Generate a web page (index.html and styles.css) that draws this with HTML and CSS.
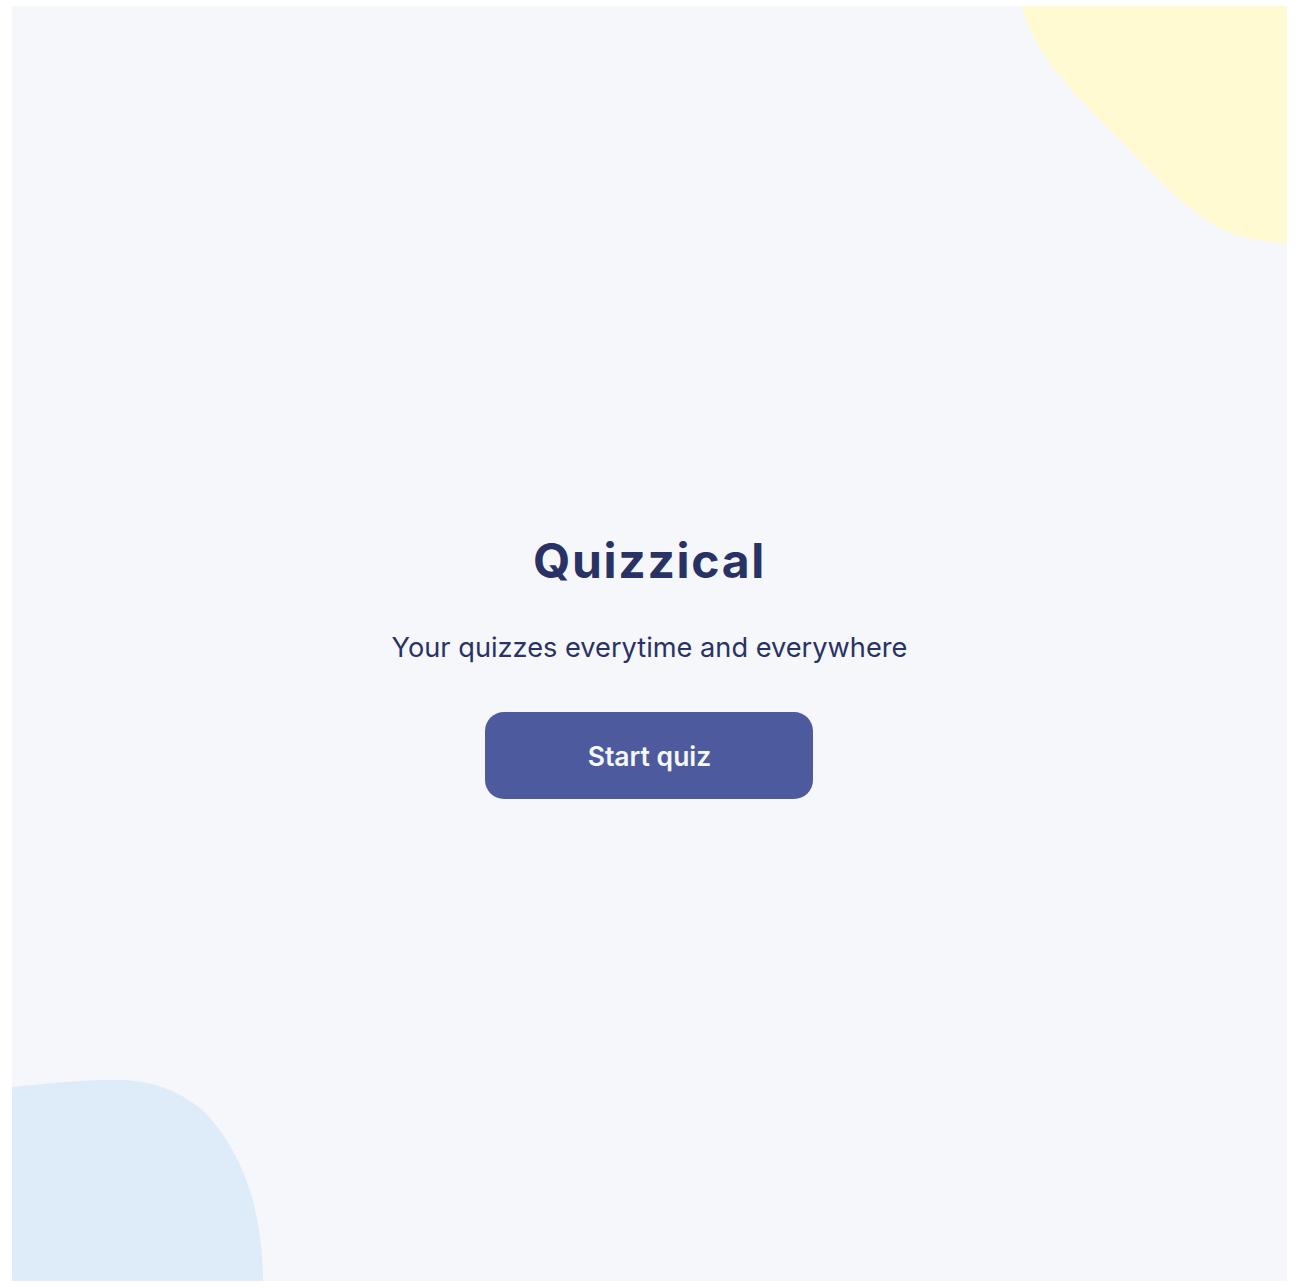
FILE: index.html
```html
<!DOCTYPE html>
<html lang="en">
<head>
<meta charset="utf-8">
<title>Quizzical</title>
<link rel="stylesheet" href="styles.css">
</head>
<body>
<main class="app">
  <svg class="blob blob-yellow" viewBox="0 0 265 237" aria-hidden="true">
    <path d="M0 0 L265 0 L265 237 C245 236 228 233 218 230 C200 225 182 214 158 194 C140 178 112 148 88 124 C60 96 45 80 30 60 C15 40 5 20 0 0 Z" fill="#FFFAD1"/>
  </svg>
  <svg class="blob blob-blue" viewBox="0 0 252 201" aria-hidden="true">
    <path d="M0 7 C40 3 80 -1 110 0 C140 1 165 10 188 28 C212 50 232 85 242 125 C249 155 251 180 251 201 L0 201 Z" fill="#DEEBF8"/>
  </svg>
  <section class="intro">
    <h1 class="title">Quizzical</h1>
    <p class="subtitle">Your quizzes everytime and everywhere</p>
    <button class="start-btn" type="button">Start quiz</button>
  </section>
</main>
</body>
</html>
```

FILE: styles.css
```css
html, body {
  margin: 0;
  padding: 0;
  background: #ffffff;
}

body {
  font-family: "Inter", "Noto Sans", sans-serif;
  color: #293264;
}

.app {
  position: relative;
  overflow: hidden;
  width: 1275px;
  height: 1275px;
  margin: 6px 11px 6px 12px;
  background: #F5F7FB;
  display: flex;
  align-items: center;
  justify-content: center;
}

.blob {
  position: absolute;
  display: block;
}

.blob-yellow {
  top: 0;
  right: 0;
  width: 265px;
  height: 237px;
}

.blob-blue {
  left: 0;
  bottom: 0;
  width: 252px;
  height: 201px;
}

.intro {
  position: relative;
  display: flex;
  flex-direction: column;
  align-items: center;
  padding-top: 44px;
}

.title {
  margin: 0;
  font-size: 48px;
  line-height: 58px;
  font-weight: 700;
  letter-spacing: 1.7px;
  color: #293264;
}

.subtitle {
  margin: 42px 0 0;
  font-size: 27.2px;
  line-height: 32px;
  font-weight: 400;
  color: #293264;
}

.start-btn {
  margin-top: 48px;
  width: 328px;
  height: 87px;
  border: none;
  border-radius: 19px;
  background: #4D5B9E;
  color: #F5F7FB;
  font-family: "Inter", "Noto Sans", sans-serif;
  font-size: 26.5px;
  font-weight: 600;
  cursor: pointer;
}
```
